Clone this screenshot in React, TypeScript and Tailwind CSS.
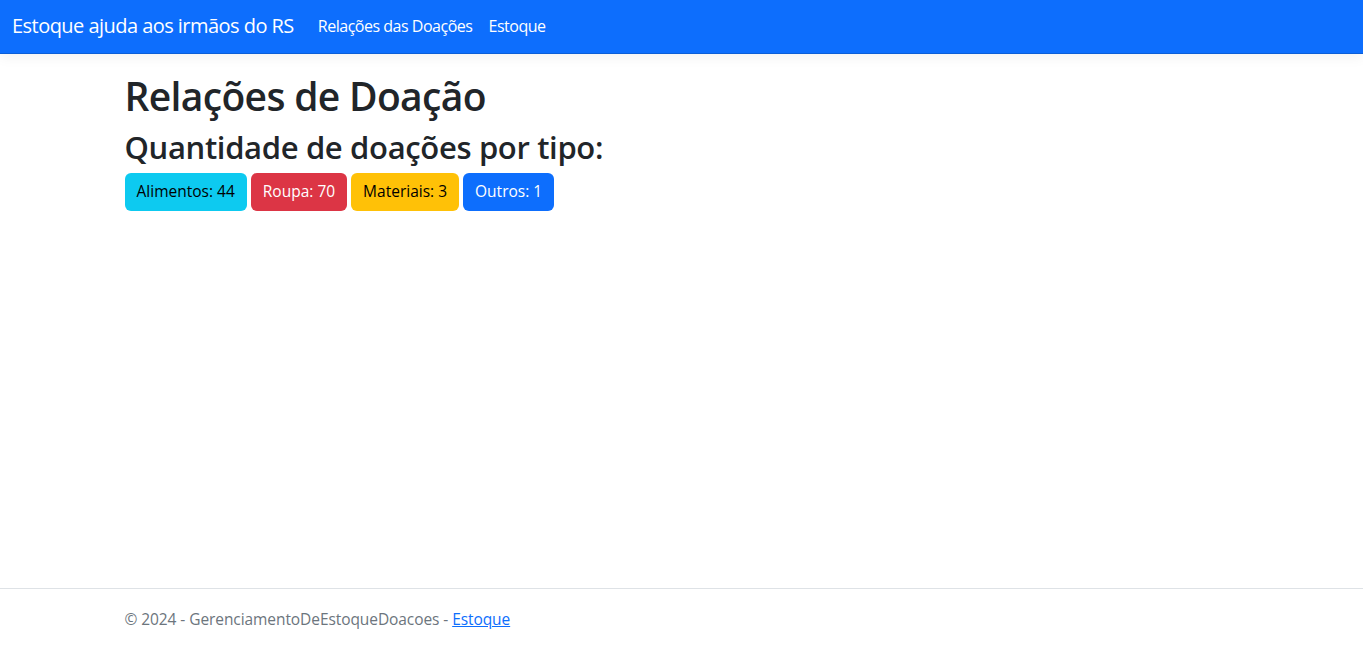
const donationTypes = [
    { label: 'Alimentos', count: 44, className: 'bg-[#0dcaf0] text-black' },
    { label: 'Roupa', count: 70, className: 'bg-[#dc3545] text-white' },
    { label: 'Materiais', count: 3, className: 'bg-[#ffc107] text-black' },
    { label: 'Outros', count: 1, className: 'bg-[#0d6efd] text-white' },
]

export default function App() {
    return (
        <div className="h-screen flex flex-col overflow-hidden bg-white text-[#212529] font-['Open_Sans',sans-serif]">
            <nav className="h-[54px] shrink-0 bg-[#0d6efd] flex items-center px-3 pb-[2px] shadow-[0_0.25rem_0.75rem_rgba(0,0,0,0.05)] border-b border-[#0b5ed7]">
                <a href="#" className="text-white text-[20px] tracking-[-0.027em] mr-4">Estoque ajuda aos irmãos do RS</a>
                <ul className="flex tracking-[-0.03em]">
                    <li><a href="#" className="block px-2 text-white text-[16px]">Relações das Doações</a></li>
                    <li><a href="#" className="block px-2 text-white text-[16px]">Estoque</a></li>
                </ul>
            </nav>
            <main className="flex-1 w-[1140px] mx-auto pl-[13px] pr-3 pt-[18px]">
                <h1 className="text-[39px] leading-[48px] font-semibold tracking-[-0.017em] mb-[8px]">Relações de Doação</h1>
                <h2 className="text-[31px] leading-[38px] font-semibold tracking-[-0.011em] mb-[7px]">Quantidade de doações por tipo:</h2>
                <div className="flex gap-1">
                    {donationTypes.map((t) => (
                        <button key={t.label} className={`${t.className} px-3 h-[38px] text-[15.5px] rounded-md`}>
                            {t.label}: {t.count}
                        </button>
                    ))}
                </div>
            </main>
            <footer className="h-[58px] shrink-0 border-t border-[#dee2e6] text-[#6c757d] text-[15.5px] tracking-[-0.005em] leading-[60px] whitespace-nowrap">
                <div className="w-[1140px] mx-auto pl-[13px] pr-3">
                    &copy; 2024 - GerenciamentoDeEstoqueDoacoes - <a href="#" className="text-[#0d6efd] underline">Estoque</a>
                </div>
            </footer>
        </div>
    )
}
